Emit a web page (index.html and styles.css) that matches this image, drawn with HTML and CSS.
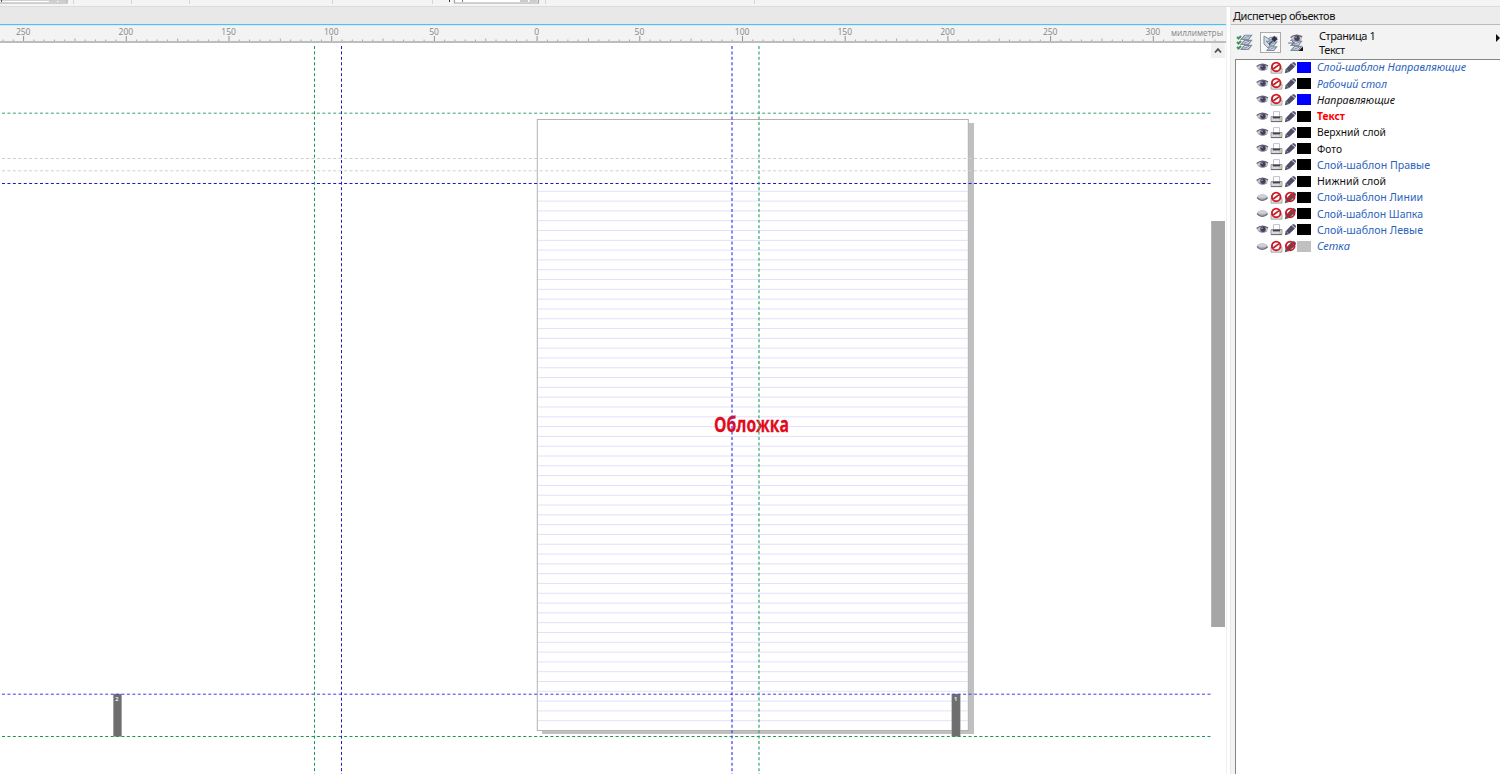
FILE: index.html
```html
<!DOCTYPE html>
<html lang="ru">
<head>
<meta charset="utf-8">
<title>Диспетчер объектов</title>
<link rel="stylesheet" href="styles.css">
</head>
<body>
<svg class="defs" aria-hidden="true">
  <symbol id="eye" viewBox="0 0 13 13">
    <path d="M.7 6Q6 0 12.2 5.5L11.5 8Q6 12 2 8Z" fill="#c4c4cf"/>
    <path d="M.6 5.6Q5.5 1.2 12 4.9" fill="none" stroke="#66667c" stroke-width="1.3"/>
    <path d="M2.5 7.8Q6 10.6 10.5 8.4" fill="none" stroke="#8a8a9c" stroke-width="1"/>
    <circle cx="7" cy="6.3" r="2.7" fill="#41415a"/><circle cx="6" cy="5.3" r=".7" fill="#c5c5d5"/>
  </symbol>
  <symbol id="closed" viewBox="0 0 13 13">
    <ellipse cx="6.3" cy="6.5" rx="5.3" ry="3.2" fill="#b0b0b8"/>
    <ellipse cx="6.3" cy="5.3" rx="4.5" ry="1.5" fill="#d0d0d6"/>
    <path d="M1 6.7Q6 12.2 11.6 6.7" fill="none" stroke="#6d6d80" stroke-width="1.2"/>
  </symbol>
  <symbol id="printer" viewBox="0 0 13 13">
    <path d="M3.5 7V1.6H9.5V7" fill="#fff" stroke="#b3b3bd" stroke-width=".8"/>
    <path d="M1 6.5H12V11.5H1Z" fill="#d8d8dd" stroke="#8b8b99" stroke-width=".8"/>
    <path d="M2.8 7.5H10.2" stroke="#3f3f55" stroke-width="1.8"/>
    <path d="M1 11.6H12" stroke="#66667a"/><path d="M9 10H11" stroke="#d5ce43" stroke-width="1.3"/>
  </symbol>
  <symbol id="pencil" viewBox="0 0 13 13">
    <path d="M.8 12.2L1.7 8.2 7.2 2.2 11 5.6 5.2 11Z" fill="#4d4d66"/>
    <path d="M7.8 1.9L9.3.9Q11.4 1 12.2 3.3L11.4 5.1Z" fill="#5a5a74"/>
    <path d="M2.3 8.6L4.6 10.7" stroke="#aaaabc" stroke-width=".8"/>
  </symbol>
  <symbol id="ban" viewBox="0 0 13 13">
    <circle cx="6.2" cy="5.9" r="4.3" fill="none" stroke="#c91c25" stroke-width="1.9"/>
    <path d="M3.2 8L9.1 3.6" stroke="#c91c25" stroke-width="1.8"/>
  </symbol>
  <symbol id="noprint" viewBox="0 0 13 13">
    <path d="M1 7H12V12.2H1Z" fill="#dedee3" stroke="#9a9aa8" stroke-width=".8"/>
    <path d="M9.5 11H11.4" stroke="#d9d160" stroke-width="1.2"/>
    <circle cx="6.2" cy="5.9" r="4" fill="#fff"/><use href="#ban"/>
  </symbol>
  <symbol id="noedit" viewBox="0 0 13 13"><use href="#pencil"/><use href="#ban"/></symbol>
  <symbol id="layers" viewBox="0 0 12 16">
    <g fill="#d9e1ea" stroke="#7c8b9f" stroke-width="1.1">
      <path d="M1 14.5L4.2 10.7H10.7L7.7 14.5Z"/><path d="M1 9.7L4.2 6H10.7L7.7 9.7Z"/><path d="M1 5L4.2 1.2H10.7L7.7 5Z"/>
    </g>
    <path d="M3.5 13.5L8.5 11.5M3.5 8.7L8.5 6.8M3.5 4L8.5 2" stroke="#7f8ea2" stroke-width=".9"/>
  </symbol>
</svg>

<header class="toolbar">
  <svg width="1500" height="7">
    <path d="M73.5 0V4M131.5 0V4M189.5 0V4M332.5 0V4M432.5 0V4M545.5 0V4M754.5 0V4" stroke="#d5d5d5"/>
    <path d="M0 0H67V3H0" fill="#fff" stroke="#a5a5a5" stroke-width="1.2"/>
    <rect x="49" width="8" height="2" fill="#ccc"/><rect x="58.5" width="8" height="2" fill="#ccc"/>
    <path d="M1.5 0V2" stroke="#555"/>
    <path d="M454.5 0V3H538.5V0" fill="#fff" stroke="#a5a5a5" stroke-width="1.2"/>
    <rect x="520" width="8" height="2" fill="#ccc"/><rect x="529.5" width="8" height="2" fill="#ccc"/>
    <path d="M449.5 0V2" stroke="#333"/><path d="M462.5 0V2" stroke="#9b7a50"/>
  </svg>
</header>
<div class="workspace">
  <main class="editor">
    <div class="tabs"></div>
    <svg class="ruler" width="1226" height="17"><g id="ticks"></g>
      <text x="1171" y="9.5" textLength="52" lengthAdjust="spacingAndGlyphs">миллиметры</text>
    </svg>
    <svg class="canvas" width="1226" height="731" viewBox="0 43 1226 731">
      <path d="M968 123H974V734H542V730H968Z" fill="#c0c0c0"/>
      <rect x="537.3" y="119.5" width="431" height="611" fill="#fff" stroke="#b2b2b2"/>
      <g id="lines" stroke="#e2e0fc"></g>
      <text class="cover" x="714" y="432" textLength="75" lengthAdjust="spacingAndGlyphs">Обложка</text>
      <rect x="113.3" y="694" width="8.4" height="42.5" fill="#6e6e6e" stroke="#aaa" stroke-width=".5"/>
      <rect x="951.8" y="694" width="8.4" height="42.5" fill="#6e6e6e" stroke="#aaa" stroke-width=".5"/>
      <text class="num" x="115.2" y="700.8">2</text><text class="num" x="954" y="700.8">1</text>
      <g class="guides">
        <path d="M2 158.5H1211" stroke="#cfcfcf"/><path d="M2 170.8H1211" stroke="#cfcfcf"/>
        <path d="M2 113.2H1211" stroke="#3aa36c"/>
        <path d="M2 183.5H1211" stroke="#1a1ac8"/>
        <path d="M2 694.2H1211" stroke="#3c3cf0"/>
        <path d="M2 736.5H1211" stroke="#159a50"/>
        <path d="M314.5 46V774" stroke="#159a50"/>
        <path d="M341.5 46V774" stroke="#1a1ac8"/>
        <path d="M732 46V774" stroke="#3c3cf5" stroke-width="1.2"/>
        <path d="M759 46V774" stroke="#35a56b" stroke-width="1.2"/>
      </g>
      <rect x="1211" y="43" width="14" height="15" fill="#f0f0f0"/>
      <path d="M1215 52.5L1218 49.2 1221 52.5" fill="none" stroke="#505050" stroke-width="1.8"/>
      <rect x="1211.2" y="221" width="13.8" height="406" fill="#a6a6a6"/>
    </svg>
  </main>
  <div class="splitter"></div>
  <aside class="docker">
    <h1 class="title">Диспетчер объектов</h1>
    <div class="tools">
      <svg class="tool" width="18" height="20"><use href="#layers" x="4" y="1" width="13" height="17"/><path d="M1 4L2.5 5.5 5 3M1 9L2.5 10.5 5 8M1 14L2.5 15.5 5 13" fill="none" stroke="#4a8f5e" stroke-width="2"/></svg>
      <svg class="tool pressed" width="21" height="21"><use href="#layers" x="5" y="3" width="12" height="16"/><path d="M3 3L8 6V9L5 8 9 12 7 15 3 11Z" fill="#d5dce6" stroke="#7f8da0"/><path d="M13.2 2.8L16.8 6.3 13.5 9 10.3 6Z" fill="#30304a"/><path d="M8 11.5L12 7.5" stroke="#55556c" stroke-width="1.4"/></svg>
      <svg class="tool" width="19" height="20"><use href="#layers" x="2" y="2" width="13" height="17"/><use href="#eye" x="2" y="-1" width="13" height="13"/><path d="M0 10H6M4 8L6.5 10 4 12" stroke="#67758a" fill="none"/><path d="M15 13.5V18H10.5Z" fill="#111"/></svg>
      <p class="current"><span class="page">Страница 1</span><span class="layer">Текст</span></p>
      <svg class="flyout" width="4" height="8"><path d="M0 0L4 4 0 8Z" fill="#111"/></svg>
    </div>
    <ul class="layers" id="layerList"></ul>
  </aside>
</div>
<script src="app.js"></script>
</body>
</html>
```
FILE: styles.css
```css
* { box-sizing: border-box; }
body { margin: 0; width: 1500px; height: 774px; overflow: hidden; display: flex; flex-direction: column; background: #f1f1f1; font: 11px "Noto Sans", "Open Sans", sans-serif; color: #111; }
svg { display: block; }
.defs { position: absolute; width: 0; height: 0; }
.toolbar { height: 7px; background: #f4f4f4; border-bottom: 1px solid #dcdcdc; overflow: hidden; }
.workspace { flex: 1; display: flex; min-height: 0; }
.editor { width: 1226px; background: #fff; }
.tabs { height: 18px; background: #e8e8e8; border-bottom: 1px solid #4fc0f5; }
.ruler { border-top: 1px solid #d5ecf7; height: 18px; background: #f3f3f3; border-bottom: 2px solid #bdbdbd; font: 8.5px "Open Sans", sans-serif; fill: #858585; }
.ruler .mark { text-anchor: middle; }
.cover { font: 700 22px "Open Sans", sans-serif; fill: #e20a1b; stroke: #e20a1b; stroke-width: .3px; }
.num { font: 700 5.5px "Open Sans", sans-serif; fill: #eee; }
.guides { stroke-dasharray: 3 2.43; fill: none; }
.splitter { width: 5px; background: #fff; border-right: 1px solid #e8e8e8; border-left: 1px solid #f0f0f0; }
.docker { flex: 1; display: flex; flex-direction: column; background: #f3f3f3; min-width: 0; }
.title { margin: 0; height: 18px; padding-left: 2px; background: #ececec; border-bottom: 1px solid #bababa; font-size: 11px; font-weight: 400; line-height: 18px; letter-spacing: -.42px; white-space: nowrap; }
.tools { height: 34px; display: flex; padding-left: 5px; flex-shrink: 0; }
.tool { margin-top: 8px; flex-shrink: 0; }
.pressed { margin: 7px 7px 0 6px; background: #fafafa; border: 1px solid #aaa; }
.current { margin: 4px 0 0 12px; display: flex; flex-direction: column; line-height: 13.5px; white-space: nowrap; letter-spacing: -.42px; }
.flyout { margin: 9px 0 0 auto; }
.layers { flex: 1; margin: 0 0 0 4px; padding: 0 0 0 20px; list-style: none; background: #fff; border: solid #858585; border-width: 1px 0 0 1px; }
.row { display: flex; height: 16.25px; align-items: center; }
.row:first-child { margin-top: -.7px; }
.icon { width: 13px; height: 13px; margin-right: 1px; }
.swatch { width: 14px; height: 11px; margin-left: -1px; background: #000; }
.swatch.blue { background: #00f; }
.swatch.gray { background: #c0c0c0; }
.name { margin-left: 6px; overflow: visible; fill: #111; }
.master { fill: #2b63bd; }
.italic { font-style: italic; }
.active { fill: #f00; font-weight: 700; }
```
FILE: app.js
```js
const NS = "http://www.w3.org/2000/svg";
function draw(parent, tag, attrs, text) {
  const el = document.createElementNS(NS, tag);
  for (const [key, value] of Object.entries(attrs)) el.setAttribute(key, value);
  if (text !== undefined) el.textContent = text;
  parent.append(el);
  return el;
}

// Ruler: one tick per 5 mm, a label per 50 mm, origin at the page's left edge.
const ticks = document.getElementById("ticks");
for (let n = -52; n <= 66; n++) {
  const x = 537.1 + n * 10.27;
  const major = n % 10 === 0;
  const top = major ? 10 : n % 5 === 0 ? 12.5 : 13.5;
  draw(ticks, "path", { d: `M${x} ${top}V15`, stroke: major ? "#777" : "#999", "stroke-width": 0.8 });
  if (major) draw(ticks, "text", { class: "mark", x: x - 0.4, y: 9.4 }, Math.abs(n * 5));
}

// Ruled lines of the page.
const lines = document.getElementById("lines");
for (let i = 0; i < 55; i++) {
  const y = 191.3 + i * 9.804;
  draw(lines, "path", { d: `M538 ${y}H968` });
}

const layers = [
  ["Слой-шаблон Направляющие", 149, "master italic", "eye noprint pencil", "blue"],
  ["Рабочий стол", 70, "master italic", "eye noprint pencil", ""],
  ["Направляющие", 78, "italic", "eye noprint pencil", "blue"],
  ["Текст", 28, "active", "eye printer pencil", ""],
  ["Верхний слой", 69, "", "eye printer pencil", ""],
  ["Фото", 25, "", "eye printer pencil", ""],
  ["Слой-шаблон Правые", 113, "master", "eye printer pencil", ""],
  ["Нижний слой", 69, "", "eye printer pencil", ""],
  ["Слой-шаблон Линии", 106, "master", "closed noprint noedit", ""],
  ["Слой-шаблон Шапка", 106, "master", "closed noprint noedit", ""],
  ["Слой-шаблон Левые", 106, "master", "eye printer pencil", ""],
  ["Сетка", 33, "master italic", "closed noprint noedit", "gray"],
];
const list = document.getElementById("layerList");
for (const [name, width, style, icons, color] of layers) {
  const row = document.createElement("li");
  row.className = "row";
  for (const icon of icons.split(" ")) {
    const svg = draw(row, "svg", { class: "icon" });
    draw(svg, "use", { href: "#" + icon, width: 13, height: 13 });
  }
  const swatch = document.createElement("span");
  swatch.className = "swatch " + color;
  row.append(swatch);
  const label = draw(row, "svg", { class: "name " + style, width, height: 16 });
  draw(label, "text", { x: 0, y: 12, textLength: width, lengthAdjust: "spacingAndGlyphs" }, name);
  list.append(row);
}
```
